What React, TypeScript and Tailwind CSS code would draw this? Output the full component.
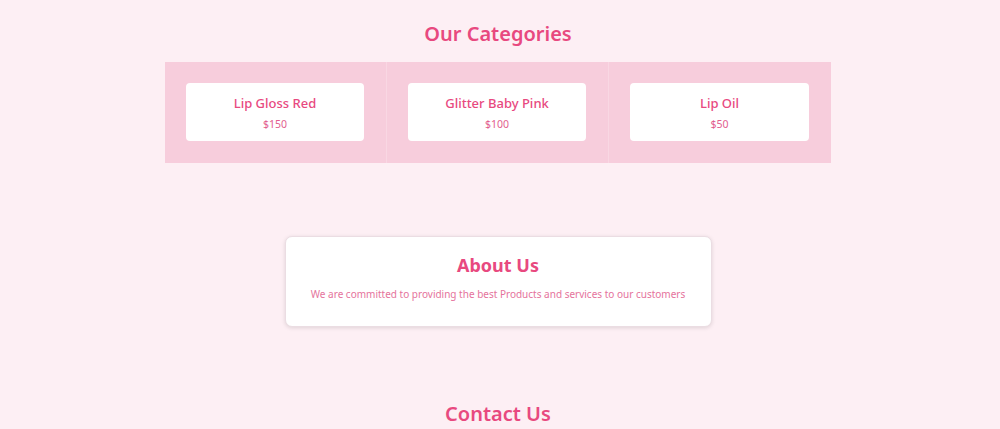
const CATEGORIAS = [
  { nome: 'Lip Gloss Red', preco: '$150' },
  { nome: 'Glitter Baby Pink', preco: '$100' },
  { nome: 'Lip Oil', preco: '$50' },
]

export default function App() {
  return (
    <main
      className="min-h-screen bg-[#fdeff4] pr-1 overflow-hidden"
      style={{ fontFamily: '"Segoe UI", "Noto Sans", sans-serif' }}
    >
      <section className="pt-[20px] flex flex-col items-center">
        <h2 className="text-[20px] leading-[28px] font-semibold text-[#e8497f]">Our Categories</h2>
        <div className="mt-[14px] w-[666px] bg-[#f7cddc] grid grid-cols-3">
          {CATEGORIAS.map((c, i) => (
            <div
              key={c.nome}
              className={`pl-[21px] pr-[22px] pt-[21px] pb-[22px] ${i < 2 ? 'border-r border-[#f9d7e3]' : ''}`}
            >
              <div className="bg-white rounded-[4px] h-[58px] flex flex-col items-center justify-center">
                <p className="text-[13px] leading-[18px] font-medium text-[#e8497f]">{c.nome}</p>
                <p className="text-[10.5px] leading-[14px] mt-[5px] text-[#e25d8e]">{c.preco}</p>
              </div>
            </div>
          ))}
        </div>
      </section>

      <section className="mt-[73px] flex justify-center">
        <div className="w-[427px] h-[91px] bg-white rounded-[7px] border border-[#ebdde3] shadow-[0_1px_4px_rgba(0,0,0,0.12)] flex flex-col items-center pt-[15px]">
          <h2 className="text-[18px] leading-[26px] font-bold text-[#e8497f]">About Us</h2>
          <p className="mt-[9px] text-[10px] leading-[14px] text-[#e5739c]">
            We are committed to providing the best Products and services to our customers
          </p>
        </div>
      </section>

      <section className="mt-[73px] flex justify-center">
        <h2 className="text-[20px] leading-[28px] font-semibold text-[#e8497f]">Contact Us</h2>
      </section>
    </main>
  )
}
